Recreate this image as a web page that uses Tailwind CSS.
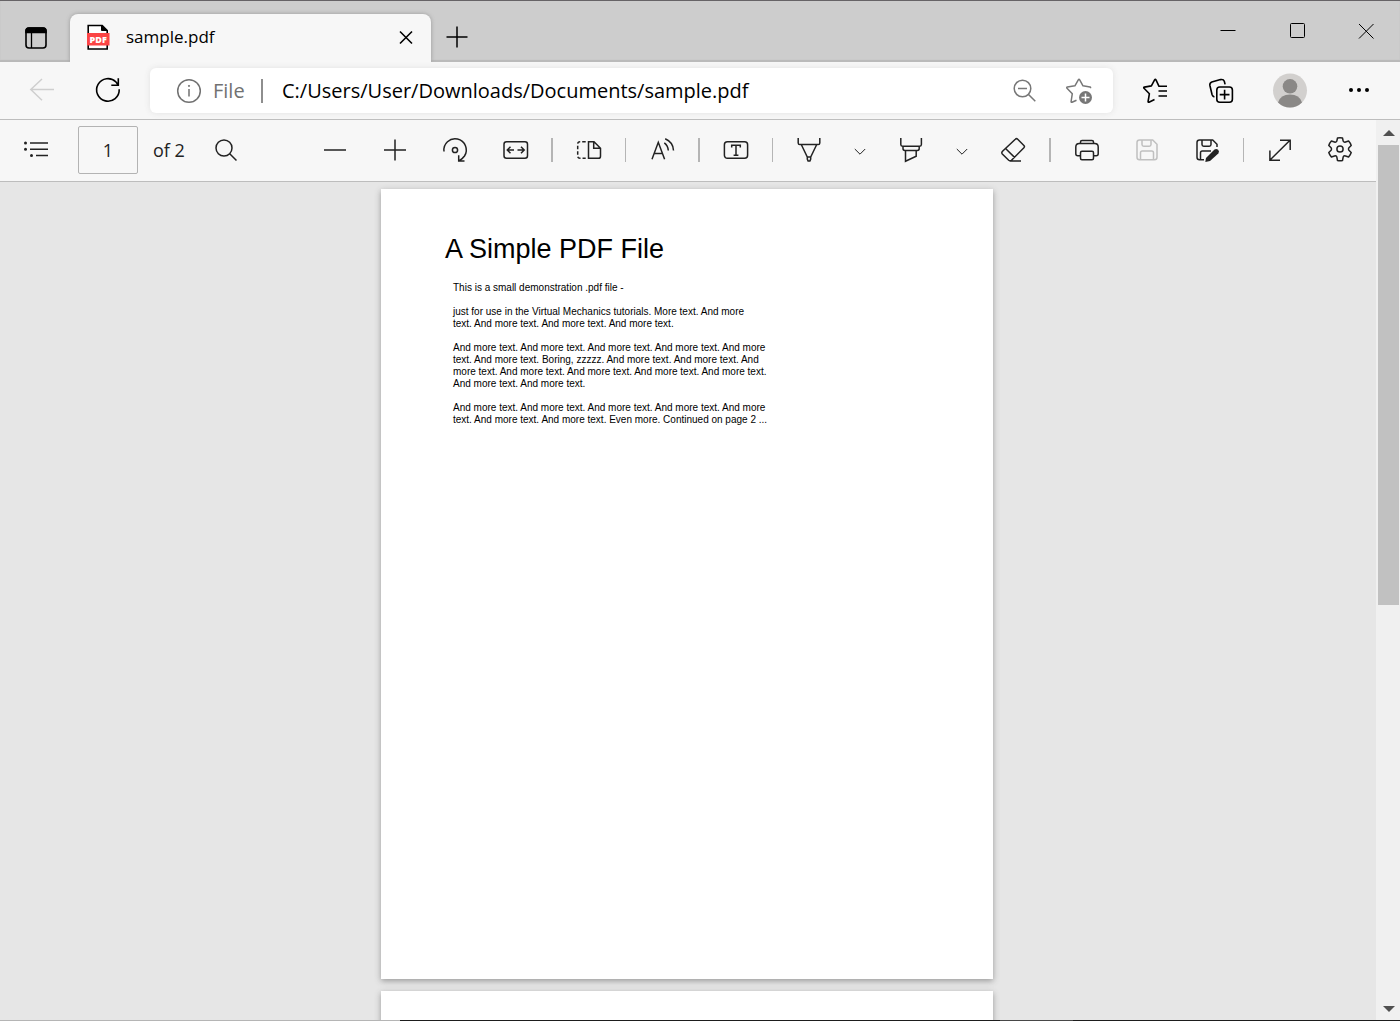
<!DOCTYPE html>
<html lang="en">
<head>
    <meta charset="UTF-8">
    <meta name="viewport" content="width=device-width, initial-scale=1.0">
    <title>sample.pdf</title>
    <script src="https://cdn.jsdelivr.net/npm/@tailwindcss/browser@4"></script>
    <style>
        body {
            font-family: "Open Sans", "Noto Sans", sans-serif;
        }
        svg {
            fill: none;
            stroke: currentColor;
            overflow: visible;
        }
    </style>
</head>
<body class="h-screen flex flex-col overflow-hidden bg-[#f7f7f7] text-black">
    <!-- Tab strip -->
    <header class="h-[62px] shrink-0 flex bg-[#cdcdcd] border-t border-[#666366] shadow-[inset_0_-2px_1px_#b9b9b9]">
        <button aria-label="Tab actions" class="w-[70px] pl-0.5 pt-3 flex items-center justify-center">
            <svg class="size-6" viewBox="0 0 24 24" stroke-width="1.6">
                <rect x="2" y="2" width="20" height="20" rx="3"/>
                <path d="M2 6.5V5a3 3 0 0 1 3-3h14a3 3 0 0 1 3 3v1.500z" fill="currentColor"/>
                <path d="M7.500 6v16" stroke-width="1.300"/>
            </svg>
        </button>
        <div class="relative w-[361px] mt-[13px] pb-0.5 flex items-center rounded-t-lg bg-[#f7f7f7] shadow-[0_0_4px_#999] [clip-path:inset(-5px_-5px_0_-5px)]">
            <svg class="w-6 h-[26px] ml-4" viewBox="0 0 24 26">
                <path d="M2.200 1.500h14l5 5v18.500h-19z" fill="white" stroke-width="1.600"/>
                <path d="M15.500 1.500v5h5.500z" fill="currentColor"/>
                <rect x="1" y="9" width="22.500" height="12.500" fill="#fb4444" stroke="none"/>
                <text x="12.200" y="18.500" text-anchor="middle" font-size="9" font-weight="800" fill="white" stroke="none">PDF</text>
            </svg>
            <span class="ml-4 text-[17px] leading-6">sample.pdf</span>
            <button aria-label="Close tab" class="ml-auto mr-[17px]">
                <svg class="size-4" viewBox="0 0 16 16" stroke-width="1.600"><path d="M2 2.500l12 12M14 2.500L2 14.500"/></svg>
            </button>
        </div>
        <button aria-label="New tab" class="w-[52px] pt-2.5 flex items-center justify-center">
            <svg class="size-6" viewBox="0 0 24 24" stroke-width="1.500"><path d="M1.500 12h21M12 1.500v21"/></svg>
        </button>
        <div class="ml-auto pb-0.5 flex gap-px">
            <button aria-label="Minimize" class="w-[68px] flex items-center justify-center">
                <svg class="size-4" viewBox="0 0 16 16"><path d="M.5 7.500h15"/></svg>
            </button>
            <button aria-label="Maximize" class="w-[68px] flex items-center justify-center">
                <svg class="size-4" viewBox="0 0 16 16"><rect x="1.500" y=".5" width="14" height="14" rx="1"/></svg>
            </button>
            <button aria-label="Close" class="w-[68px] flex items-center justify-center">
                <svg class="size-4" viewBox="0 0 16 16"><path d="M1 1l14.500 14.500M15.500 1L1 15.500"/></svg>
            </button>
        </div>
    </header>

    <!-- Address row -->
    <nav class="h-[58px] shrink-0 flex items-center gap-[18px] pl-[18px] pr-[17px] border-b border-[#bdbdbd]">
        <button aria-label="Back" disabled class="w-12 flex justify-center text-[#cfcfcf]">
            <svg class="size-6" viewBox="0 0 24 24" stroke-width="1.500"><path d="M24 10.500H.8M12 0L.8 10.500 12 21.200"/></svg>
        </button>
        <button aria-label="Refresh" class="w-12 flex justify-center">
            <svg class="size-6" viewBox="0 0 24 24" stroke-width="1.600"><path d="M23.200 10.300A11.300 11.300 0 1 1 20 3l2 2.700M22.300-.8v7h-7"/></svg>
        </button>
        <div class="flex-1 h-[45px] pl-[27px] pr-5 flex items-center rounded-md bg-white shadow-[0_0_6px_#e2e2e2]">
            <svg class="size-6 shrink-0 text-[#717171]" viewBox="0 0 24 24" stroke-width="1.500">
                <circle cx="12" cy="12" r="11.300"/><path d="M12 10v7.500"/><circle cx="12" cy="6.900" r=".6" fill="currentColor" stroke-width="1"/>
            </svg>
            <label for="url" class="w-12 ml-3 text-[20px] leading-7 text-[#717171]">File</label>
            <span class="w-0.5 h-6 bg-[#8e8e8e]"></span>
            <input id="url" type="text" value="C:/Users/User/Downloads/Documents/sample.pdf" class="flex-1 min-w-0 ml-[19px] text-[20px] leading-7 outline-none">
            <button aria-label="Zoom" class="text-[#777]">
                <svg class="size-6" viewBox="0 0 24 24" stroke-width="1.500"><circle cx="10.500" cy="9.500" r="8.300"/><path d="M16.500 15.500l6.800 6.800M6 9.500h9"/></svg>
            </button>
            <button aria-label="Add to favorites" class="ml-[29px] text-[#777]">
                <svg class="w-7 h-6" viewBox="0 0 28 24" stroke-width="1.500" stroke-linejoin="round">
                    <path d="M11.500 21.200L7 23.300q-1 .3-.9-.8l1.200-7.800L2 9.200q-.7-1 .4-1.200l7.500-1.200L13.300.9q.7-1.200 1.400 0l3.300 5.900 7 1.200q1 .2.300 1.100"/>
                    <circle cx="20.500" cy="18.500" r="6.500" fill="currentColor" stroke="none"/>
                    <path d="M20.500 14.500v8M16.500 18.500h8" stroke="white"/>
                </svg>
            </button>
        </div>
        <button aria-label="Favorites" class="w-12 flex justify-center">
            <svg class="size-6" viewBox="0 0 24 24" stroke-width="1.600" stroke-linejoin="round">
                <path d="M11.500 20.500L6 23.200q-1 .3-.9-.7l1.300-7.800L1 9.300q-.7-1 .4-1.200l7-1.200L11.600.9q.7-1.100 1.400 0l3 6.400H24M15.500 12H24M15.500 17H24"/>
            </svg>
        </button>
        <button aria-label="Collections" class="w-12 flex justify-center">
            <svg class="size-6" viewBox="0 0 24 24" stroke-width="1.600">
                <rect x="7.800" y="8" width="15.600" height="15.200" rx="3"/>
                <path d="M15.600 10.700v9.800M10.700 15.600h9.800"/>
                <path d="M5.400 18q-1.700-.4-2.300-2.200L.9 6.500Q.4 4 2.800 3L11.500.6q3-.6 3.800 1.600l.8 3.200"/>
            </svg>
        </button>
        <button aria-label="Profile" class="w-[54px] flex justify-center">
            <svg class="size-[34px]" viewBox="0 0 34 34">
                <g stroke="none">
                    <circle cx="17" cy="16.500" r="17" fill="#d2d0ce"/>
                    <circle cx="17" cy="12.300" r="7.300" fill="#8a8886"/>
                    <path d="M5 28.500q2.500-8 12-8t12 8a17 17 0 0 1-24 0z" fill="#8a8886"/>
                </g>
            </svg>
        </button>
        <button aria-label="Settings and more" class="w-12 flex justify-center">
            <svg class="size-6" viewBox="0 0 24 24">
                <g fill="currentColor" stroke="none"><circle cx="4" cy="11" r="2"/><circle cx="12" cy="11" r="2"/><circle cx="20" cy="11" r="2"/></g>
            </svg>
        </button>
    </nav>

    <div class="flex-1 min-h-0 flex">
        <div class="flex-1 min-w-0 flex flex-col">
            <!-- PDF toolbar -->
            <div class="h-[62px] shrink-0 px-3 pb-0.5 flex items-center justify-between border-b border-[#bdbdbd] text-[#222]">
                <div class="flex items-center">
                    <button aria-label="Table of contents" class="w-12 flex justify-center">
                        <svg class="size-6" viewBox="0 0 24 24" stroke-width="1.500">
                            <path d="M6 5h18M6 11.300h18M12 17.500h12"/>
                            <g fill="currentColor" stroke="none"><circle cx="1.500" cy="5" r="1.500"/><circle cx="1.500" cy="11.300" r="1.500"/><circle cx="7.500" cy="17.500" r="1.500"/></g>
                        </svg>
                    </button>
                    <input id="page" type="text" value="1" class="w-[60px] h-12 ml-[18px] text-center text-lg bg-[#f7f7f7] border border-[#b3b3b3] rounded-xs">
                    <label for="page" class="w-[46px] ml-[15px] text-lg">of 2</label>
                    <button aria-label="Find" class="w-12 ml-[3px] flex justify-center">
                        <svg class="size-6" viewBox="0 0 24 24" stroke-width="1.500"><circle cx="10" cy="10" r="8"/><path d="M15.700 15.700l6.800 6.800"/></svg>
                    </button>
                </div>

                <div class="flex items-center gap-3">
                    <button aria-label="Zoom out" class="w-12 flex justify-center">
                        <svg class="size-6" viewBox="0 0 24 24" stroke-width="1.500"><path d="M1 12h22"/></svg>
                    </button>
                    <button aria-label="Zoom in" class="w-12 flex justify-center">
                        <svg class="size-6" viewBox="0 0 24 24" stroke-width="1.500"><path d="M1 12h22M12 1.500v21"/></svg>
                    </button>
                    <button aria-label="Rotate" class="w-12 flex justify-center">
                        <svg class="size-6" viewBox="0 0 24 24" stroke-width="1.500">
                            <path d="M1 13.500A11.200 11.200 0 1 1 21.500 18q-1.700 2.500-5.500 5M15.700 17.200V23h5.800"/><circle cx="12" cy="12" r="2.600"/>
                        </svg>
                    </button>
                    <button aria-label="Fit to width" class="w-12 flex justify-center">
                        <svg class="size-6" viewBox="0 0 24 24" stroke-width="1.500">
                            <rect x="1" y="3.700" width="23.500" height="16.600" rx="2.500"/>
                            <path d="M11 12H4.300M7.500 8.800L4.300 12l3.200 3.200M14.500 12h6.700M18 8.800l3.200 3.200-3.200 3.200"/>
                        </svg>
                    </button>
                    <span class="w-0.5 h-6 bg-[#b5b5b5]"></span>
                    <button aria-label="Page view" class="w-12 flex justify-center">
                        <svg class="size-6" viewBox="0 0 24 24" stroke-width="1.500">
                            <path d="M11.500 3.700H17l6.500 6.500v8q0 2.100-2.100 2.100h-9.900zM16.700 3.700v6.500h6.800"/>
                            <path d="M8.700 3.700H3Q.7 3.700.7 6v12q0 2.300 2.300 2.300h5.700" stroke-dasharray="3.500 2"/>
                        </svg>
                    </button>
                    <span class="w-px h-6 bg-[#b5b5b5]"></span>
                    <button aria-label="Read aloud" class="w-12 flex justify-center">
                        <svg class="size-6" viewBox="0 0 24 24" stroke-width="1.500">
                            <path d="M2 21.200L8.300 4.300 14.600 21.200M4.200 15.500h8.200M14.300 4.800q3.700 2.700 4 7.700M15.200 .8q8 3.500 8.300 11.700"/>
                        </svg>
                    </button>
                    <span class="w-0.5 h-6 bg-[#b5b5b5]"></span>
                    <button aria-label="Add text" class="w-12 flex justify-center">
                        <svg class="size-6" viewBox="0 0 24 24" stroke-width="1.500">
                            <rect x=".4" y="3.700" width="23.200" height="16.600" rx="3"/>
                            <path d="M7.700 9.500V7.200h8.600v2.300M12 7.200v10M9.600 17.200h4.800"/>
                        </svg>
                    </button>
                    <span class="w-px h-6 bg-[#b5b5b5]"></span>
                    <button aria-label="Draw" class="w-12 flex justify-center">
                        <svg class="size-6" viewBox="0 0 24 24" stroke-width="1.500">
                            <path d="M1.200 0v5q0 1.600 1.600 1.600h18.400q1.600 0 1.600-1.600V0M4.500 7l5.800 12h3.400l5.800-12M10.300 19v2l.8 2h1.800l.8-2v-2"/>
                        </svg>
                    </button>
                    <button aria-label="Draw options" class="w-[30px] flex justify-center">
                        <svg class="w-3 h-3 mt-1" viewBox="0 0 12 12"><path d="M.8 3L6 8.200 11.200 3"/></svg>
                    </button>
                    <button aria-label="Highlight" class="w-12 flex justify-center">
                        <svg class="size-6" viewBox="0 0 24 24" stroke-width="1.500">
                            <path d="M1.800 0v6.500q0 1.700 1.700 1.700h17.200q1.700 0 1.700-1.700V0M4 8.500v2q0 1.900 1.800 1.900h12.600q1.800 0 1.800-1.900v-2M6.500 12.500v10.700l10.700-5v-5.700"/>
                        </svg>
                    </button>
                    <button aria-label="Highlight options" class="w-[30px] flex justify-center">
                        <svg class="w-3 h-3 mt-1" viewBox="0 0 12 12"><path d="M.8 3L6 8.200 11.200 3"/></svg>
                    </button>
                    <button aria-label="Erase" class="w-12 flex justify-center">
                        <svg class="size-6" viewBox="0 0 24 24" stroke-width="1.500">
                            <path d="M14.300 1.200q1.200-1.200 2.400 0l6.200 6.200q1.100 1.200 0 2.400L10.500 22.300q-1.400 1.200-2.800 0L1.300 16q-1-1.200 0-2.500zM4.800 10.800l9 8.800M9 23h11"/>
                        </svg>
                    </button>
                    <span class="w-0.5 h-6 bg-[#b5b5b5]"></span>
                    <button aria-label="Print" class="w-12 flex justify-center">
                        <svg class="size-6" viewBox="0 0 24 24" stroke-width="1.500">
                            <path d="M5.500 5.500V4q0-1.600 1.600-1.600h9.800q1.600 0 1.600 1.600v1.500"/>
                            <path d="M5.500 17.700H2.800q-2 0-2-2V9q0-3.500 3.500-3.500h15.400q3.500 0 3.500 3.500v6.700q0 2-2 2h-2.700"/>
                            <rect x="5.500" y="13.200" width="13" height="8.600" rx="1.500"/>
                        </svg>
                    </button>
                    <button aria-label="Save" disabled class="w-12 flex justify-center text-[#c0c0c0]">
                        <svg class="size-6" viewBox="0 0 24 24" stroke-width="1.500">
                            <path d="M4.500 2h13.200L22 6.300v13q0 2.500-2.500 2.500h-15Q2 21.800 2 19.300V4.500Q2 2 4.500 2z"/>
                            <path d="M7 2v4.500q0 1.700 1.700 1.700h5.600q1.700 0 1.700-1.700V2M5.500 21.800v-7q0-1.800 1.800-1.800h9.400q1.800 0 1.800 1.800v7"/>
                        </svg>
                    </button>
                    <button aria-label="Save as" class="w-12 flex justify-center">
                        <svg class="size-6" viewBox="0 0 24 24" stroke-width="1.500">
                            <path d="M9 21.800H4.500Q2 21.800 2 19.300V4.500Q2 2 4.500 2h13.200L22 6.300V9"/>
                            <path d="M7 2v4.500q0 1.700 1.700 1.700h5.600q1.700 0 1.700-1.700V2M5.500 21.800v-7q0-1.800 1.800-1.800h8.700"/>
                            <path d="M11 20l8.500-8.500q1.800-1.300 3.600.2 1.700 1.900.2 3.700L15 23l-4.700 1z" fill="currentColor" stroke="none"/>
                        </svg>
                    </button>
                    <span class="w-px h-6 bg-[#b5b5b5]"></span>
                    <button aria-label="Full screen" class="w-12 flex justify-center">
                        <svg class="size-6" viewBox="0 0 24 24" stroke-width="1.500"><path d="M2 22L22 2.200M12 2.200h10.200V12M1.900 12.500V22.200H12"/></svg>
                    </button>
                    <button aria-label="Settings" class="w-12 flex justify-center">
                        <svg class="w-6 h-[26px]" viewBox="0 0 24 26" stroke-width="1.500" stroke-linejoin="round">
                            <path d="M9.500 1Q12 .3 14.500 1L15.200 4.200Q16 5.500 17.500 5L20.600 4Q22.500 6 23.200 8.500L20.900 10.700Q20 12 20.900 13.300L23.200 15.500Q22.500 18 20.600 20L17.500 19Q16 18.500 15.200 19.800L14.500 23.500Q12 24.200 9.500 23.500L8.800 19.800Q8 18.500 6.500 19L3.400 20Q1.500 18 .8 15.500L3.100 13.300Q4 12 3.100 10.700L.8 8.500Q1.500 6 3.400 4L6.500 5Q8 5.500 8.800 4.200z"/>
                            <circle cx="12" cy="12" r="3.100"/>
                        </svg>
                    </button>
                </div>
            </div>

            <!-- Document -->
            <main class="flex-1 min-h-0 overflow-hidden pt-[7px] pr-0.5 flex flex-col items-center gap-3 bg-[#e6e6e6] font-['Liberation_Sans',Arial,sans-serif]">
                <article class="w-[612px] h-[790px] shrink-0 px-16 pt-11 bg-white shadow-[0_2px_6px_#999]">
                    <h1 class="text-[27px] leading-8">A Simple PDF File</h1>
                    <div class="ml-2 mt-[17px] space-y-3 text-[10px] leading-3">
                        <p>This is a small demonstration .pdf file -</p>
                        <p>just for use in the Virtual Mechanics tutorials. More text. And more<br>
                            text. And more text. And more text. And more text.</p>
                        <p>And more text. And more text. And more text. And more text. And more<br>
                            text. And more text. Boring, zzzzz. And more text. And more text. And<br>
                            more text. And more text. And more text. And more text. And more text.<br>
                            And more text. And more text.</p>
                        <p>And more text. And more text. And more text. And more text. And more<br>
                            text. And more text. And more text. Even more. Continued on page 2 ...</p>
                    </div>
                </article>
                <article class="w-[612px] h-[790px] shrink-0 bg-white shadow-[0_2px_6px_#999]"></article>
            </main>
        </div>

        <!-- Scrollbar -->
        <aside class="w-6 shrink-0 pl-0.5 pr-px pt-2.5 pb-2 flex flex-col items-center bg-[#f0f0f0] text-[#505050]">
            <svg class="w-3 h-1.5" viewBox="0 0 12 6"><path d="M6 0l6 6H0z" fill="currentColor" stroke="none"/></svg>
            <div class="w-full flex-1 mt-[9px]"><div class="w-full bg-[#c1c1c1]" style="height: 53.4%"></div></div>
            <svg class="w-3 h-1.5" viewBox="0 0 12 6"><path d="M0 0h12L6 6z" fill="currentColor" stroke="none"/></svg>
        </aside>
    </div>

    <footer class="h-px shrink-0 flex bg-[#1d1d1d]">
        <div class="w-2/7 bg-[#b5b5b5]"></div>
        <div class="w-3/7"></div>
        <div class="w-[73px] bg-[#484848]"></div>
    </footer>
</body>
</html>
